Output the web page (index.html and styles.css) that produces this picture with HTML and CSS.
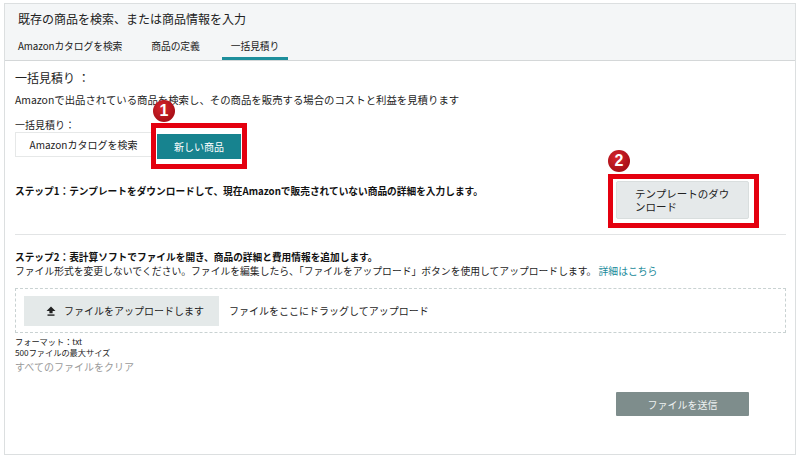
FILE: index.html
```html
<!DOCTYPE html>
<html lang="ja">
<head>
<meta charset="utf-8">
<title>一括見積り</title>
<link rel="stylesheet" href="styles.css">
</head>
<body>
<div class="panel">
  <div class="head">
    <div class="title">既存の商品を検索、または商品情報を入力</div>
    <div class="tabs">
      <span class="tab">Amazonカタログを検索</span>
      <span class="tab">商品の定義</span>
      <span class="tab active">一括見積り</span>
    </div>
  </div>
  <div class="content">
    <div class="heading">一括見積り ：</div>
    <p class="desc">Amazonで出品されている商品を検索し、その商品を販売する場合のコストと利益を見積ります</p>
    <div class="label">一括見積り：</div>
    <div class="seg">
      <button class="seg-btn">Amazonカタログを検索</button>
      <div class="marked">
        <button class="seg-btn on">新しい商品</button>
        <span class="mark mark1"></span>
        <span class="badge badge1">1</span>
      </div>
    </div>
    <div class="step1">
      <p class="step-title">ステップ1：テンプレートをダウンロードして、現在Amazonで販売されていない商品の詳細を入力します。</p>
      <div class="marked">
        <button class="tpl-btn">テンプレートのダウンロード</button>
        <span class="mark mark2"></span>
        <span class="badge badge2">2</span>
      </div>
    </div>
    <hr class="sep">
    <p class="step-title">ステップ2：表計算ソフトでファイルを開き、商品の詳細と費用情報を追加します。</p>
    <p class="note">ファイル形式を変更しないでください。ファイルを編集したら、「ファイルをアップロード」ボタンを使用してアップロードします。 <a class="link" href="#">詳細はこちら</a></p>
    <div class="drop">
      <button class="up-btn">
        <svg class="up-icon" width="10" height="10" viewBox="0 0 10 10" aria-hidden="true">
          <path d="M5 0.5 L9.5 5 H6.6 V7.3 H3.4 V5 H0.5 Z" fill="#222"/>
          <rect x="1.5" y="8.4" width="7" height="1.4" fill="#222"/>
        </svg>
        ファイルをアップロードします
      </button>
      <span class="drop-text">ファイルをここにドラッグしてアップロード</span>
    </div>
    <div class="fmt">フォーマット：txt</div>
    <div class="fmt">500ファイルの最大サイズ</div>
    <div class="clear">すべてのファイルをクリア</div>
    <div class="actions">
      <button class="submit">ファイルを送信</button>
    </div>
  </div>
</div>
</body>
</html>
```

FILE: styles.css
```css
* { box-sizing: border-box; }
html, body {
  margin: 0;
  background: #ffffff;
}
body {
  font-family: "Noto Sans CJK JP", "Noto Sans", sans-serif;
  color: #1d1d1d;
}
p { margin: 0; }
button {
  font-family: inherit;
  cursor: pointer;
}
.panel {
  margin: 3px 0 0 4px;
  width: 792px;
  height: 452px;
  border: 1px solid #dcdfe0;
}
.head {
  background: #f4f6f7;
  border-bottom: 1px solid #d4d7d8;
}
.title {
  height: 30px;
  line-height: 29px;
  padding-left: 13px;
  font-size: 12px;
  color: #222;
}
.tabs {
  display: flex;
  height: 26px;
  padding-left: 4px;
  gap: 11px;
}
.tab {
  padding: 0 9px;
  font-size: 9.8px;
  line-height: 24px;
  color: #222;
  border-bottom: 2px solid transparent;
  letter-spacing: -0.1px;
}
.tab:nth-child(3) { margin-left: 2px; }
.tab.active { border-bottom: 3px solid #1d8f9c; }
.content {
  padding: 9px 9px 0 10px;
}
.heading {
  font-size: 12px;
  line-height: 16px;
  color: #222;
}
.desc {
  margin-top: 7px;
  font-size: 10.4px;
  line-height: 14px;
}
.label {
  margin-top: 11px;
  font-size: 10px;
  line-height: 13px;
}
.seg {
  display: flex;
  gap: 5px;
  margin-top: 1px;
}
.seg-btn {
  height: 25px;
  border: 1px solid #e6e8e8;
  background: #fff;
  font-size: 10px;
  color: #222;
  padding: 0;
}
.seg > .seg-btn { width: 137px; }
.seg-btn.on {
  width: 84px;
  background: #17838f;
  border-color: #17838f;
  color: #fff;
}
.marked {
  position: relative;
}
.mark {
  position: absolute;
  border: 5px solid #e4000f;
  pointer-events: none;
}
.mark1 { left: -6px; right: -6px; top: -9px; bottom: -10px; }
.mark2 { left: -8px; right: -10px; top: -7px; bottom: -9px; }
.badge {
  position: absolute;
  width: 22px;
  height: 22px;
  border-radius: 50%;
  background: radial-gradient(circle at 40% 35%, #d6262d, #a90f17 70%);
  color: #fff;
  font-family: "Liberation Sans", "DejaVu Sans", sans-serif;
  font-weight: bold;
  font-size: 16px;
  line-height: 22px;
  text-align: center;
}
.badge1 { left: -4px; top: -32px; }
.badge2 { left: -8px; top: -31px; }
.step1 {
  display: flex;
  justify-content: space-between;
  align-items: flex-start;
  margin-top: 22px;
  padding-right: 37px;
}
.step1 .step-title { margin-top: 3px; }
.step-title {
  font-size: 9.7px;
  line-height: 14px;
  font-weight: bold;
  color: #111;
}
.tpl-btn {
  width: 133px;
  height: 38px;
  padding: 0 16px 0 18px;
  border: 1px solid #d9dede;
  border-radius: 2px;
  background: #e5e9ea;
  text-align: left;
  font-size: 10.5px;
  line-height: 13px;
  color: #222;
}
.sep {
  margin: 15px 0 0;
  border: 0;
  border-top: 1px solid #e2e4e5;
}
.sep + .step-title { margin-top: 15px; }
.note {
  font-size: 9.8px;
  line-height: 14px;
}
.link {
  color: #1a8a9a;
  text-decoration: none;
}
.drop {
  display: flex;
  align-items: center;
  gap: 10px;
  margin-top: 10px;
  height: 45px;
  padding: 0 8px;
  border: 1px dashed #c9d2d2;
}
.up-btn {
  display: flex;
  align-items: center;
  gap: 8px;
  width: 195px;
  height: 30px;
  padding: 0 0 0 22px;
  border: 0;
  background: #e4e9e9;
  font-size: 10px;
  color: #222;
}
.drop-text { font-size: 10px; }
.fmt {
  font-size: 8.2px;
  line-height: 10.5px;
  color: #222;
}
.drop + .fmt { margin-top: 3px; }
.clear {
  margin-top: 3px;
  font-size: 10px;
  line-height: 13px;
  color: #9a9a9a;
}
.actions {
  display: flex;
  justify-content: flex-end;
  padding-right: 37px;
  margin-top: 19px;
}
.submit {
  width: 133px;
  height: 24px;
  border: 0;
  border-radius: 1px;
  background: #7e8d8c;
  color: #eef2f2;
  font-size: 10px;
}
```
